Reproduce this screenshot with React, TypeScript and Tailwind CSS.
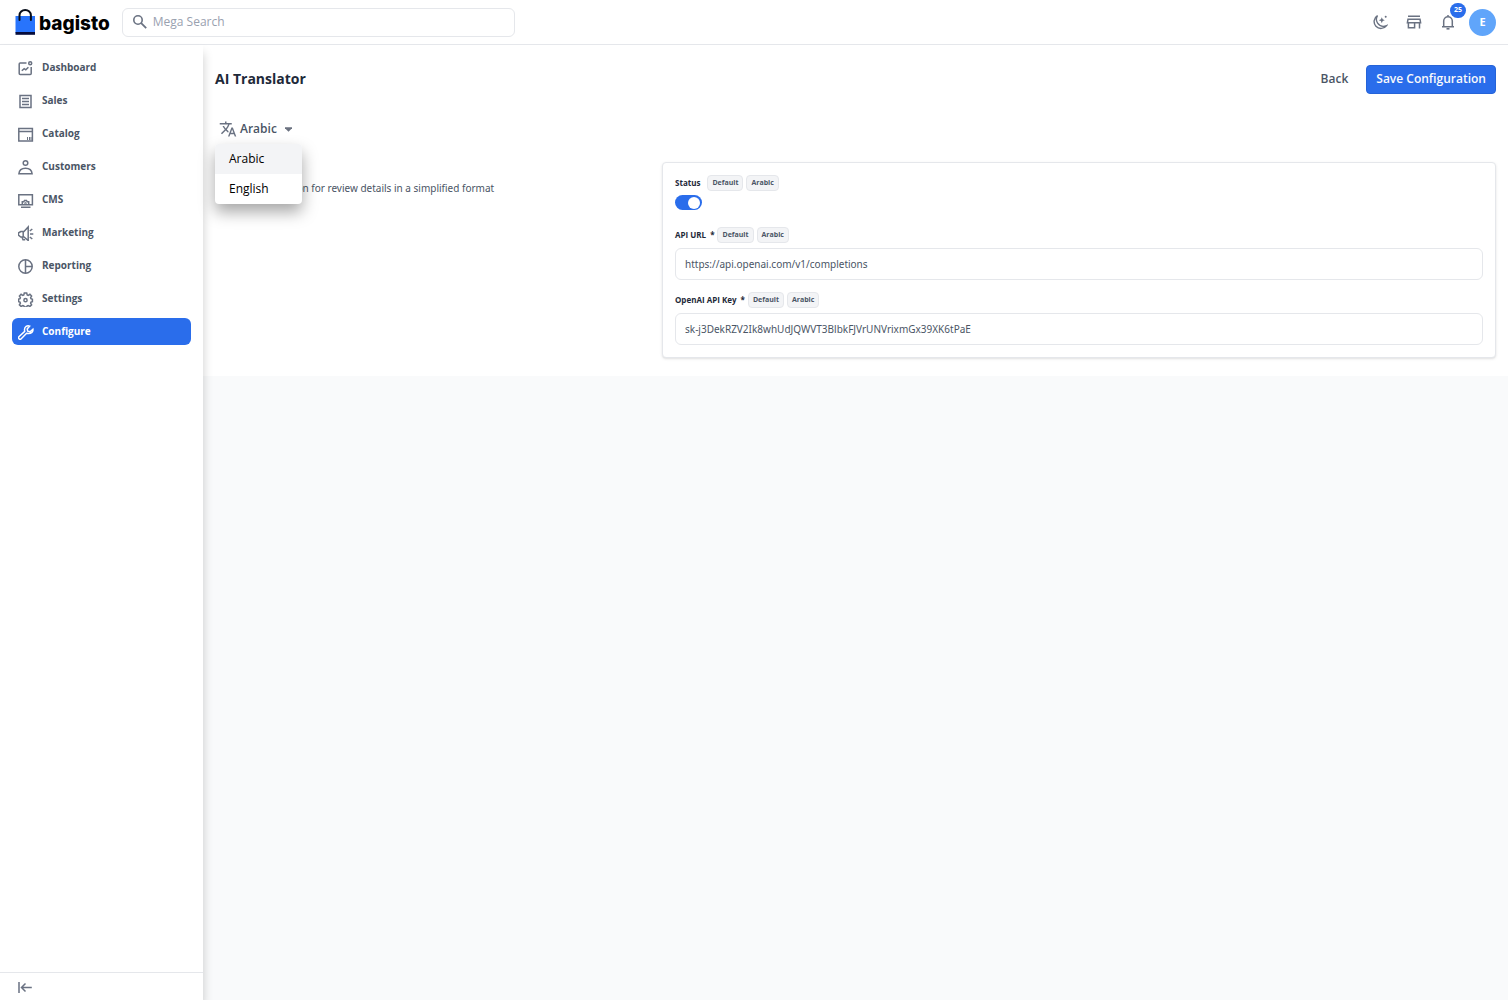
import React, { useState } from "react";

type IconProps = { children: React.ReactNode; className?: string };

const Icon: React.FC<IconProps> = ({ children, className = "size-4" }) => (
  <svg
    viewBox="0 0 16 16"
    fill="none"
    stroke="currentColor"
    strokeWidth="1.5"
    className={`shrink-0 ${className}`}
    aria-hidden="true"
  >
    {children}
  </svg>
);

const menuItems = [
  {
    name: "Dashboard",
    icon: (
      <>
        <path d="M8.5 3H2.2a1 1 0 0 0-1 1v9.500a1 1 0 0 0 1 1h10a1 1 0 0 0 1-1V7" />
        <circle cx="12.2" cy="3.2" r="1.5" />
        <path d="M3.800 10.800 6.200 8.600l1.600 1.200L10.400 7.200" />
      </>
    ),
  },
  {
    name: "Sales",
    icon: (
      <>
        <path d="M2 2.500h11v12H2z" />
        <path d="M4 5.500h7M4 8.500h7M4 11.500h7" />
      </>
    ),
  },
  {
    name: "Catalog",
    icon: (
      <>
        <path d="M.8 2.500h13.600v12.500H.8zM.8 5.500h13.600" />
        <path d="M9.500 11v3M11.500 11v3M13 11v3" strokeWidth="1" />
      </>
    ),
  },
  {
    name: "Customers",
    icon: (
      <>
        <circle cx="7.500" cy="4" r="2.300" />
        <path d="M.9 14.700c.3-3.300 3-5.500 6.600-5.500s6.300 2.200 6.600 5.500z" />
      </>
    ),
  },
  {
    name: "CMS",
    icon: (
      <>
        <path d="M.8 2.800h13.600v10H.8zM3 15.200h9.500" />
        <path d="M4.300 12.500V9.800h1.500l.7-1.300h2l.7 1.300h1.500v2.700" />
        <circle cx="7.500" cy="11.200" r=".8" strokeWidth="1" />
      </>
    ),
  },
  {
    name: "Marketing",
    icon: (
      <>
        <path d="M10.200 2v13.500L6 12H2.800L.4 10V8L2.800 6.500H6z" />
        <path d="M5.200 6.500V12M4 12l1 2.800h2.200M11.800 6l2.500-2M12 9h3.300M11.800 12l2.500 2" />
      </>
    ),
  },
  {
    name: "Reporting",
    icon: (
      <>
        <circle cx="7.500" cy="8.500" r="6.700" />
        <path d="M7.500 1.800v13.400M7.500 8.500h6.700" />
      </>
    ),
  },
  {
    name: "Settings",
    icon: (
      <>
        <path d="M6.300 2h2.400l.5 1.900 1 .4 1.700-1 1.700 1.700-1 1.700.4 1 1.400.5v2.400l-1.400.5-.4 1 1 1.700-1.700 1.700-1.700-1-1 .4-.5 1H6.300l-.5-1-1-.4-1.700 1-1.700-1.700 1-1.700-.4-1-1.400-.5V8.200L2 7.700l.4-1-1-1.700 1.700-1.700 1.700 1 1-.4z" />
        <circle cx="7.500" cy="9.200" r="1.600" />
      </>
    ),
  },
  {
    name: "Configure",
    icon: (
      <path d="M14.900 5.200 12 7.700 9.700 7.200 9.200 5l2.500-2.900C9.300 1 6.300 2.700 6.500 6l.2 1.400-5.800 5.400c-1.200 1.300.8 3.400 2.100 2.200l5.600-5.700 1.500.2c3.200.2 5.300-1.800 4.800-4.300z" />
    ),
  },
];

const languages = ["Arabic", "English"];

const Badges: React.FC = () => (
  <>
    {["Default", "Arabic"].map((badge) => (
      <span
        key={badge}
        className="h-4 px-1 flex items-center rounded-sm border border-gray-200 bg-gray-100 text-[7px] font-bold text-gray-600"
      >
        {badge}
      </span>
    ))}
  </>
);

type FieldProps = {
  id: string;
  label: string;
  value: string;
  onChange: (value: string) => void;
};

const TextField: React.FC<FieldProps> = ({ id, label, value, onChange }) => (
  <div>
    <div className="flex items-center gap-[3px] mb-[5px]">
      <label
        htmlFor={id}
        className="flex gap-1 text-[8px] font-bold text-gray-800"
      >
        {label} <span>*</span>
      </label>
      <Badges />
    </div>
    <input
      id={id}
      type="text"
      value={value}
      onChange={(e) => onChange(e.target.value)}
      className="block w-full h-8 px-[9px] rounded-md border border-gray-200 font-['Noto_Sans',sans-serif] text-[10px] text-gray-600 focus:outline-none focus:border-gray-400"
    />
  </div>
);

const App: React.FC = () => {
  const [search, setSearch] = useState("");
  const [language, setLanguage] = useState("Arabic");
  const [menuOpen, setMenuOpen] = useState(true);
  const [enabled, setEnabled] = useState(true);
  const [apiUrl, setApiUrl] = useState("https://api.openai.com/v1/completions");
  const [apiKey, setApiKey] = useState(
    "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"
  );

  return (
    <div className="min-h-screen flex flex-col bg-gray-50 font-['Open_Sans','Noto_Sans',sans-serif]">
      <header className="h-[45px] flex items-center justify-between pl-[15px] pr-3 border-b border-gray-200 bg-white">
        <div className="flex items-center gap-3">
          <a href="#" className="flex items-center gap-1 text-black">
            <svg viewBox="0 0 20 26" className="w-5 h-[26px]" aria-hidden="true">
              <path d="M.5 7h19.500v17H.5z" fill="#2874fc" />
              <path d="M.5 23h19.500v2.800H.5z" fill="#060c3b" />
              <path
                d="M4.500 11V6.200a5.700 5.200 0 0 1 11.400 0V11"
                fill="none"
                stroke="#060c18"
                strokeWidth="2"
                strokeLinecap="round"
              />
            </svg>
            <span className="pt-1 font-['Inter',sans-serif] text-[19px] leading-6 font-extrabold">
              bagisto
            </span>
          </a>
          <div className="w-[393px] h-[29px] flex items-center gap-[5px] px-[9px] rounded-md border border-gray-200">
            <Icon className="size-4 text-gray-500">
              <circle cx="6" cy="6" r="4.200" strokeWidth="1.600" />
              <path d="m9.200 9.200 5 5" strokeWidth="1.800" />
            </Icon>
            <input
              type="text"
              aria-label="Mega Search"
              placeholder="Mega Search"
              value={search}
              onChange={(e) => setSearch(e.target.value)}
              className="flex-1 text-[12px] text-gray-600 placeholder:text-gray-400 focus:outline-none"
            />
          </div>
        </div>

        <div className="flex items-center text-gray-500">
          <button aria-label="Dark mode" className="mr-[18px]">
            <Icon>
              <path
                d="M5.500 1.600A6.900 6.900 0 1 0 14.600 11.600C11 13 7.500 12 5.600 9.200 4 6.800 4 4 5.500 1.600z"
                strokeWidth="1.400"
              />
              <path
                d="m9.800 3.200.9 2.100 2.100.9-2.100.9-.9 2.100-.9-2.100-2.100-.9 2.100-.9z"
                fill="currentColor"
                stroke="none"
              />
              <circle cx="13.700" cy="2.800" r="1" fill="currentColor" stroke="none" />
            </Icon>
          </button>
          <button aria-label="Visit shop" className="mr-[18px]">
            <Icon>
              <path d="M2 2.300h12M2 5.200h12l.6 3.600H1.400zM2.400 8.800v5h6.200v-5M13.500 8.800v5.800" />
            </Icon>
          </button>
          <button aria-label="Notifications" className="relative mr-[13px]">
            <Icon>
              <path d="M2 12.700h12M3.700 12.500V7a4.300 4.300 0 0 1 8.600 0v5.500M8 2.700V1" />
              <path d="M6.500 14.800h3" strokeWidth="1.600" />
            </Icon>
            <span className="absolute -top-[11px] left-[10px] h-[15px] px-1 flex items-center rounded-full bg-[#2a6deb] text-[7px] font-bold text-white">
              25
            </span>
          </button>
          <button className="size-[27px] rounded-full bg-[#60a5fa] text-[11px] font-bold text-white">
            E
          </button>
        </div>
      </header>

      <div className="flex-1 flex">
        <aside className="w-[203px] shrink-0 flex flex-col justify-between bg-white shadow-[0_8px_10px_0_rgba(0,0,0,0.2)] z-10">
          <nav className="flex flex-col gap-[6px] px-3 pt-[9px]">
            {menuItems.map((item) => (
              <a
                key={item.name}
                href="#"
                className={`h-[27px] flex items-center gap-2 pl-[6px] rounded-md text-[10px] font-bold ${
                  item.name === "Configure"
                    ? "bg-[#2a6deb] text-white"
                    : "text-gray-600 hover:bg-gray-100"
                }`}
              >
                <Icon
                  className={
                    item.name === "Configure"
                      ? "size-4 text-white"
                      : "size-4 text-gray-500"
                  }
                >
                  {item.icon}
                </Icon>
                {item.name}
              </a>
            ))}
          </nav>
          <button
            aria-label="Collapse"
            className="h-7 pl-[17px] flex items-center border-t border-gray-200 text-gray-500"
          >
            <Icon>
              <path d="M2 3v11M4.500 8.500h10.300M8.500 4.500l-4 4 4 4" />
            </Icon>
          </button>
        </aside>

        <div className="flex-1">
          <main className="px-3 pt-5 pb-[18px] bg-white">
            <div className="flex justify-between items-center">
              <h1 className="pb-0.5 text-[14px] font-bold text-gray-800">
                AI Translator
              </h1>
              <div className="flex items-center gap-[18px]">
                <a
                  href="#"
                  className="pb-0.5 text-[12px] font-semibold text-gray-600"
                >
                  Back
                </a>
                <button className="h-[29px] px-[9px] pb-0.5 rounded-sm border border-[#2563d8] bg-[#2a6deb] text-[12px] font-semibold text-gray-50">
                  Save Configuration
                </button>
              </div>
            </div>

            <div className="relative mt-5">
              <button
                onClick={() => setMenuOpen(!menuOpen)}
                className="h-[30px] px-1 flex items-center gap-[3px] text-[12px] font-semibold text-gray-600"
              >
                <svg
                  viewBox="0 0 24 24"
                  className="size-[18px] text-gray-500"
                  fill="currentColor"
                  aria-hidden="true"
                >
                  <path d="m12.870 15.070-2.540-2.510.030-.030A17.520 17.520 0 0 0 14.070 6H17V4h-7V2H8v2H1v1.990h11.170C11.500 7.920 10.440 9.750 9 11.350 8.070 10.320 7.300 9.190 6.690 8h-2c.730 1.630 1.730 3.170 2.980 4.560l-5.090 5.020L4 19l5-5 3.110 3.110zM18.500 10h-2L12 22h2l1.120-3h4.750L21 22h2zm-2.620 7 1.620-4.330L19.120 17z" />
                </svg>
                {language}
                <svg viewBox="0 0 8 5" className="w-[7px] h-[5px] ml-[5px]" aria-hidden="true">
                  <path d="M0 0h8v1L4 5 0 1z" fill="#6b7280" />
                </svg>
              </button>
              {menuOpen && (
                <div className="absolute top-[30px] left-0 z-20 w-[87px] overflow-hidden rounded-sm bg-white shadow-[0_8px_16px_0_rgba(0,0,0,0.35)]">
                  {languages.map((name) => (
                    <button
                      key={name}
                      onClick={() => {
                        setLanguage(name);
                        setMenuOpen(false);
                      }}
                      className={`block w-full h-[30px] px-[14px] text-left text-[12px] text-black ${
                        name === language ? "bg-gray-100" : "hover:bg-gray-100"
                      }`}
                    >
                      {name}
                    </button>
                  ))}
                </div>
              )}
            </div>

            <div className="grid grid-cols-[1fr_2fr] gap-[30px] mt-[18px]">
              <p className="pt-[18px] font-['Noto_Sans',sans-serif] text-[10px] leading-4 text-gray-600">
                Provide information for review details in a simplified format
              </p>

              <form
                onSubmit={(e) => e.preventDefault()}
                className="p-3 rounded-sm border border-gray-200 bg-white shadow-sm"
              >
                <div className="mb-[17px]">
                  <div className="flex items-center gap-[3px] mb-1">
                    <label
                      htmlFor="status"
                      className="mr-1 text-[8px] font-bold text-gray-800"
                    >
                      Status
                    </label>
                    <Badges />
                  </div>
                  <input
                    id="status"
                    type="checkbox"
                    checked={enabled}
                    onChange={(e) => setEnabled(e.target.checked)}
                    className="appearance-none flex items-center w-[27px] h-[15px] px-[2px] rounded-full bg-gray-200 checked:bg-[#2a6deb] checked:justify-end before:size-3 before:rounded-full before:bg-white"
                  />
                </div>
                <div className="flex flex-col gap-3">
                  <TextField
                    id="api-url"
                    label="API URL"
                    value={apiUrl}
                    onChange={setApiUrl}
                  />
                  <TextField
                    id="api-key"
                    label="OpenAI API Key"
                    value={apiKey}
                    onChange={setApiKey}
                  />
                </div>
              </form>
            </div>
          </main>
        </div>
      </div>
    </div>
  );
};

export default App;
